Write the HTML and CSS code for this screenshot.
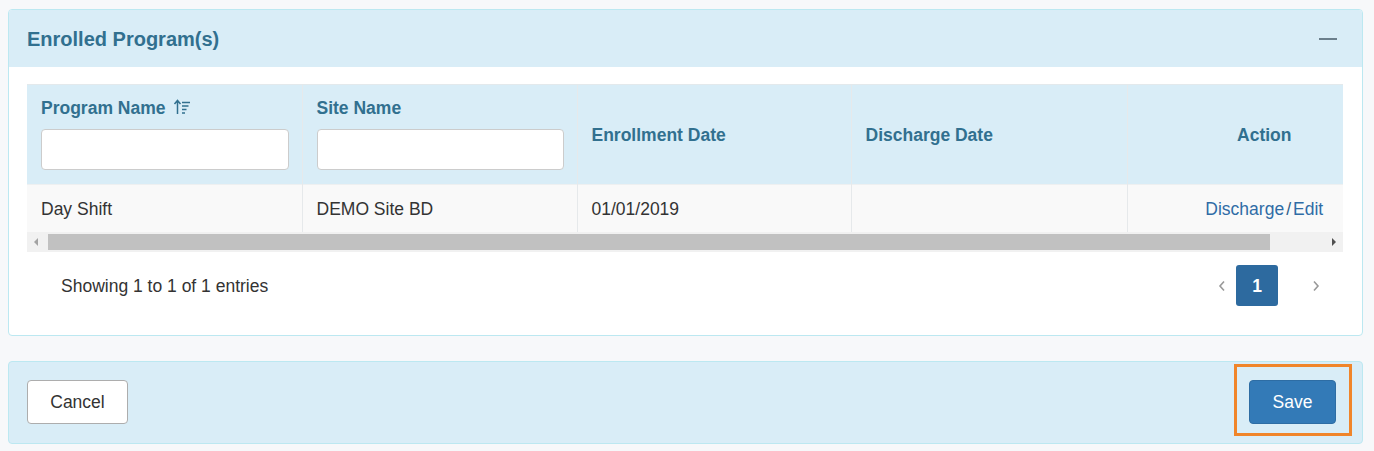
FILE: index.html
```html
<!DOCTYPE html>
<html lang="en">
<head>
    <meta charset="UTF-8">
    <meta name="viewport" content="width=device-width, initial-scale=1.0">
    <title>Enrolled Program(s)</title>
    <link rel="stylesheet" href="styles.css">
</head>
<body>
    <div class="panel">
        <div class="panel-heading">
            <h2 class="panel-title">Enrolled Program(s)</h2>
            <span class="collapse-icon"></span>
        </div>
        <div class="panel-body">
            <div class="table-scroll">
                <table class="grid">
                    <colgroup>
                        <col class="c-275">
                        <col class="c-275">
                        <col class="c-274">
                        <col class="c-276">
                        <col class="c-274">
                    </colgroup>
                    <thead>
                        <tr>
                            <th class="col-filter">
                                <div class="th-label">Program Name
                                    <svg class="sort-icon" width="18" height="16" viewBox="0 0 18 16">
                                        <path d="M4.5 15V2M1.5 5L4.5 1.5 7.5 5" fill="none" stroke="#31708f" stroke-width="1.5"/>
                                        <path d="M9 3.5h8M9 7h6.5M9 10.5h4.5M9 14h3" fill="none" stroke="#31708f" stroke-width="1.3"/>
                                    </svg>
                                </div>
                                <input type="text" class="filter-input">
                            </th>
                            <th class="col-filter">
                                <div class="th-label">Site Name</div>
                                <input type="text" class="filter-input">
                            </th>
                            <th>Enrollment Date</th>
                            <th>Discharge Date</th>
                            <th class="col-action">Action</th>
                        </tr>
                    </thead>
                    <tbody>
                        <tr>
                            <td>Day Shift</td>
                            <td>DEMO Site BD</td>
                            <td>01/01/2019</td>
                            <td></td>
                            <td class="col-action"><a href="#">Discharge</a><span class="sep">/</span><a href="#">Edit</a></td>
                        </tr>
                    </tbody>
                </table>
            </div>
            <div class="fake-scrollbar">
                <span class="arrow arrow-left"></span>
                <div class="thumb"></div>
                <span class="arrow arrow-right"></span>
            </div>
            <div class="table-footer">
                <div class="info">Showing 1 to 1 of 1 entries</div>
                <div class="pager">
                    <svg class="chevron" width="8" height="12" viewBox="0 0 8 12"><path d="M6 1.5L2 6l4 4.5" fill="none" stroke="#999" stroke-width="1.6"/></svg>
                    <span class="page current">1</span>
                    <svg class="chevron next" width="8" height="12" viewBox="0 0 8 12"><path d="M2 1.5L6 6l-4 4.5" fill="none" stroke="#999" stroke-width="1.6"/></svg>
                </div>
            </div>
        </div>
    </div>

    <div class="panel panel-actions">
        <button class="btn btn-default">Cancel</button>
        <button class="btn btn-primary highlight">Save</button>
    </div>
</body>
</html>
```

FILE: styles.css
```css
body {
    font-family: "Liberation Sans", Arial, sans-serif;
    font-size: 17.5px;
    line-height: 20px;
    margin: 0;
    padding: 9px 11px 0 8px;
    background-color: #f7f8fa;
    color: #333;
}
.panel {
    background-color: #fff;
    border: 1px solid #bce8f1;
    border-radius: 4px;
}
.panel-heading {
    display: flex;
    align-items: center;
    justify-content: space-between;
    height: 57px;
    padding: 0 25px 0 18px;
    background-color: #d9edf7;
    border-radius: 3px 3px 0 0;
}
.panel-title {
    margin: 0;
    font-size: 20px;
    font-weight: bold;
    color: #31708f;
}
.collapse-icon {
    display: block;
    width: 18px;
    height: 2px;
    margin-top: 1px;
    background-color: #6b7f8c;
}
.panel-body {
    padding: 17px 19px 29px 18px;
}
.table-scroll {
    overflow: hidden;
    border-top: 1px solid #e3e9ec;
}
.grid {
    width: 1374px;
    border-collapse: collapse;
    table-layout: fixed;
}
.c-275 { width: 275px; }
.c-274 { width: 274px; }
.c-276 { width: 276px; }
.grid th,
.grid td {
    padding: 0 14px;
    border-left: 1px solid #e6e9eb;
    text-align: left;
}
.grid th:first-child,
.grid td:first-child {
    border-left: none;
}
.grid th {
    height: 99px;
    background-color: #d9edf7;
    color: #31708f;
    font-weight: bold;
    vertical-align: middle;
}
.grid th.col-filter {
    height: 86px;
    vertical-align: top;
    padding-top: 13px;
    padding-right: 13px;
}
.grid .col-action {
    text-align: center;
}
.th-label {
    display: flex;
    align-items: center;
    gap: 7px;
}
.sort-icon {
    margin-top: -2px;
}
.filter-input {
    display: block;
    box-sizing: border-box;
    width: 100%;
    height: 41px;
    margin-top: 11px;
    border: 1px solid #ccc;
    border-radius: 4px;
    background-color: #fff;
}
.grid td {
    height: 47px;
    background-color: #f9f9f9;
    border-top: 1px solid #eef0f1;
}
.grid a {
    color: #2f6ca6;
    text-decoration: none;
}
.sep {
    margin: 0 2px;
    color: #2f5f8a;
}
.fake-scrollbar {
    display: flex;
    align-items: center;
    height: 20px;
    background-color: #f1f1f1;
}
.thumb {
    flex: 1;
    height: 16px;
    margin: 0 62px 0 10px;
    background-color: #c1c1c1;
}
.arrow {
    width: 0;
    height: 0;
    border-top: 4px solid transparent;
    border-bottom: 4px solid transparent;
}
.arrow-left {
    margin-left: 7px;
    border-right: 4px solid #a3a3a3;
}
.arrow-right {
    margin-right: 7px;
    border-left: 4px solid #505050;
}
.table-footer {
    display: flex;
    align-items: center;
    justify-content: space-between;
    padding: 13px 23px 0 34px;
}
.pager {
    display: flex;
    align-items: center;
}
.page {
    display: flex;
    align-items: center;
    justify-content: center;
    width: 42px;
    height: 41px;
    margin: 0 0 0 10px;
    border-radius: 3px;
    font-size: 17.5px;
    font-weight: bold;
}
.page.current {
    background-color: #2d6a9f;
    color: #fff;
}
.chevron.next {
    margin-left: 34px;
}
.panel-actions {
    display: flex;
    justify-content: space-between;
    margin-top: 25px;
    padding: 18px 26px 19px 18px;
    background-color: #d9edf7;
}
.btn {
    height: 44px;
    font-family: inherit;
    font-size: 17.5px;
    border-radius: 4px;
    cursor: pointer;
}
.btn-default {
    width: 101px;
    background-color: #fff;
    border: 1px solid #adadad;
    color: #333;
}
.btn-primary {
    width: 87px;
    background-color: #337ab7;
    border: 1px solid #2e6da4;
    color: #fff;
}
.highlight {
    position: relative;
}
.highlight::after {
    content: "";
    position: absolute;
    top: -17px;
    right: -17px;
    bottom: -13px;
    left: -16px;
    border: 3px solid #f0852a;
}
```
